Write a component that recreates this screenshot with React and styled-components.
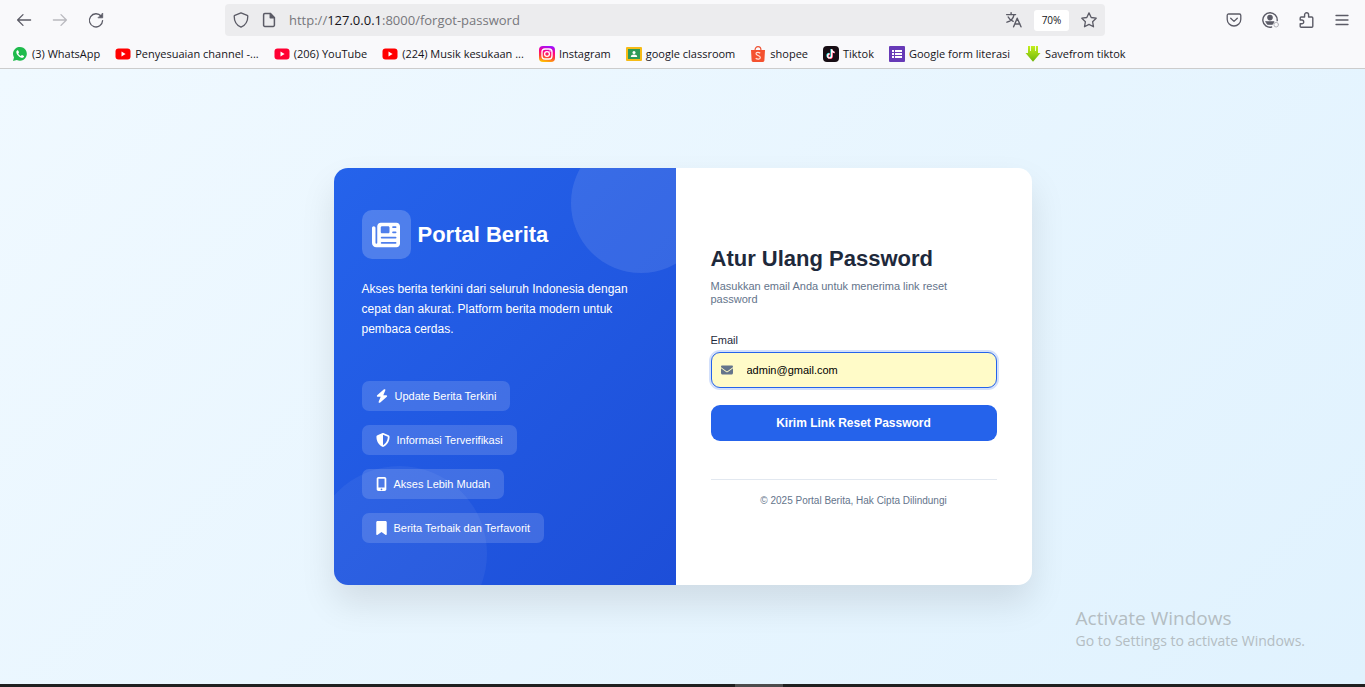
import React from "react";
import styled, { createGlobalStyle } from "styled-components";
import {
  FaNewspaper,
  FaBolt,
  FaShieldHalved,
  FaMobileScreenButton,
  FaBookmark,
  FaEnvelope,
} from "react-icons/fa6";

const ui = `"Open Sans", "Noto Sans", sans-serif`;
const arial = `"Liberation Sans", Arial, sans-serif`;

const GlobalStyle = createGlobalStyle`
  *, *::before, *::after { box-sizing: border-box; }
  body { margin: 0; font-family: ${arial}; }
  h1, h2, p, ul { margin: 0; padding: 0; }
`;

const Window = styled.div`
  min-height: 100vh;
  display: flex;
  flex-direction: column;
`;

/* ---------- Browser chrome ---------- */

const Chrome = styled.header`
  background: #f9f9fb;
  border-bottom: 1px solid #cccccc;
  font-family: ${ui};
  color: #15141a;
`;

const Toolbar = styled.div`
  display: flex;
  align-items: center;
  height: 40px;
  padding: 0 15px 0 16px;
`;

const ToolGroup = styled.div`
  display: flex;
  gap: 20px;
`;

const ToolButton = styled.button`
  display: flex;
  width: 16px;
  height: 16px;
  padding: 0;
  border: 0;
  background: none;
  color: #5b5b66;
  opacity: ${(p) => (p.disabled ? 0.4 : 1)};

  svg {
    width: 16px;
    height: 16px;
    flex: none;
    overflow: visible;
  }
`;

const UrlBar = styled.div`
  flex: 1;
  min-width: 0;
  display: flex;
  align-items: center;
  gap: 12px;
  height: 32px;
  margin: 0 121px;
  padding: 0 8px;
  border-radius: 4px;
  background: #ececee;
`;

const Address = styled.div`
  flex: 1;
  min-width: 0;
  font-size: 13px;
  line-height: 20px;
  color: #77777c;
  white-space: nowrap;
  overflow: hidden;

  b {
    font-weight: 400;
    color: #15141a;
  }
`;

const ZoomLevel = styled.button`
  width: 35px;
  height: 21px;
  padding: 0;
  border: 0;
  border-radius: 3px;
  background: #ffffff;
  color: #15141a;
  font-family: ${ui};
  font-size: 10px;
`;

const Bookmarks = styled.nav`
  display: flex;
  align-items: center;
  gap: 15px;
  height: 28px;
  padding: 0 12px;
  overflow: hidden;
`;

const Bookmark = styled.a`
  display: flex;
  align-items: center;
  gap: 4px;
  flex: none;
  font-size: 11px;
  line-height: 16px;
  color: #15141a;
  text-decoration: none;
  white-space: nowrap;

  svg {
    width: 16px;
    height: 16px;
    flex: none;
  }
`;

/* ---------- Page ---------- */

const Page = styled.main`
  position: relative;
  flex: 1;
  display: flex;
  align-items: center;
  justify-content: center;
  padding: 14px;
  background: linear-gradient(135deg, #f0f9ff 0%, #e0f2fe 100%);
`;

const Card = styled.section`
  display: grid;
  grid-template-columns: 342fr 356fr;
  width: 100%;
  max-width: 698px;
  border-radius: 14px;
  overflow: hidden;
  background: #ffffff;
  box-shadow: 0 18px 35px rgba(0, 0, 0, 0.1);
`;

const Brand = styled.div`
  position: relative;
  overflow: hidden;
  padding: 42px 28px;
  color: #ffffff;
  background: linear-gradient(135deg, #2563eb 0%, #1d4ed8 100%);

  &::before,
  &::after {
    content: "";
    position: absolute;
    border-radius: 50%;
  }

  &::before {
    top: -35px;
    right: -35px;
    width: 140px;
    height: 140px;
    background: rgba(255, 255, 255, 0.1);
  }

  &::after {
    left: -22px;
    bottom: -56px;
    width: 175px;
    height: 175px;
    background: rgba(255, 255, 255, 0.05);
  }
`;

const Logo = styled.div`
  display: flex;
  align-items: center;
  gap: 7px;
`;

const LogoTile = styled.div`
  display: flex;
  align-items: center;
  justify-content: center;
  width: 49px;
  height: 49px;
  border-radius: 10px;
  background: rgba(255, 255, 255, 0.2);
  font-size: 28px;
`;

const BrandName = styled.h1`
  font-size: 22px;
  line-height: 26px;
`;

const Tagline = styled.p`
  margin-top: 20px;
  font-size: 12px;
  line-height: 20px;
`;

const Features = styled.ul`
  display: flex;
  flex-direction: column;
  align-items: flex-start;
  gap: 14px;
  margin-top: 42px;
  list-style: none;
`;

const Feature = styled.li`
  display: flex;
  align-items: center;
  gap: 7px;
  height: 30px;
  padding: 0 14px;
  border-radius: 7px;
  background: rgba(255, 255, 255, 0.15);
  font-size: 11px;

  svg {
    flex: none;
    width: ${(p) => p.$iconWidth}px;
    height: 14px;
  }
`;

const FormPanel = styled.div`
  display: flex;
  flex-direction: column;
  justify-content: center;
  padding: 35px;
`;

const Title = styled.h2`
  font-size: 22px;
  line-height: 26px;
  color: #1e293b;
`;

const Subtitle = styled.p`
  margin-top: 8px;
  font-size: 11px;
  line-height: 13px;
  color: #64748b;
`;

const Form = styled.form`
  display: flex;
  flex-direction: column;
  margin-top: 28px;
`;

const Label = styled.label`
  font-size: 11px;
  line-height: 13px;
  color: #1e293b;
`;

const Field = styled.div`
  position: relative;
  margin: 5px 0 17px;

  svg {
    position: absolute;
    left: 10px;
    top: 12px;
    width: 12px;
    height: 12px;
    color: #64748b;
  }
`;

const Input = styled.input`
  display: block;
  width: 100%;
  height: 36px;
  padding: 0 12px 0 35px;
  border: 1px solid #2563eb;
  border-radius: 9px;
  outline: none;
  background: #fffbc8;
  box-shadow: 0 0 0 2px rgba(37, 99, 235, 0.2);
  font-family: ${arial};
  font-size: 11px;
  color: #000000;
`;

const Submit = styled.button`
  height: 36px;
  border: 0;
  border-radius: 9px;
  background: #2563eb;
  color: #ffffff;
  font-family: ${arial};
  font-size: 12px;
  font-weight: 700;
`;

const Copyright = styled.p`
  margin-top: 38px;
  padding-top: 14px;
  border-top: 1px solid #e2e8f0;
  font-size: 10px;
  line-height: 13px;
  text-align: center;
  color: #64748b;
`;

const Watermark = styled.aside`
  position: absolute;
  right: 60px;
  bottom: 33px;
  font-family: ${ui};
  font-size: 14px;
  line-height: 20px;
  color: #b4bdc2;

  strong {
    display: block;
    font-size: 19px;
    font-weight: 400;
    line-height: 26px;
  }
`;

const Taskbar = styled.footer`
  display: flex;
  justify-content: center;
  height: 3px;
  padding-left: 153px;
  background: #202020;
`;

const ActiveTask = styled.span`
  width: 48px;
  background: #4c4c4c;
`;

/* ---------- Icons ---------- */

const Line = ({ children, w = 1.3 }) => (
  <svg
    viewBox="0 0 16 16"
    fill="none"
    stroke="currentColor"
    strokeWidth={w}
    strokeLinecap="round"
    strokeLinejoin="round"
    aria-hidden="true"
  >
    {children}
  </svg>
);

const BackIcon = () => (
  <Line>
    <path d="M14.6 8H1.6M7 2.6L1.6 8 7 13.4" />
  </Line>
);
const ForwardIcon = () => (
  <Line>
    <path d="M1.4 8h13M9 2.6L14.4 8 9 13.4" />
  </Line>
);
const ReloadIcon = () => (
  <Line>
    <path d="M13.2 4.3A6.6 6.6 0 1 0 14.6 8.6" />
    <path d="M14.7 1.4v4.4h-4.4z" fill="currentColor" strokeWidth="0.8" />
  </Line>
);
const ShieldIcon = () => (
  <Line>
    <path d="M8 0.8l6.2 2.6c.4.2.6.5.6.9C14.8 9 12.4 13.4 8 15.2 3.6 13.4 1.2 9 1.2 4.3c0-.4.2-.7.6-.9z" />
  </Line>
);
const PageIcon = () => (
  <Line w={1.5}>
    <path d="M9.3 1.6H3.8a1.2 1.2 0 0 0-1.2 1.2v10.4a1.2 1.2 0 0 0 1.2 1.2h8.4a1.2 1.2 0 0 0 1.2-1.2V5.7z" />
    <path d="M9.3 1.6v4.1h4.1z" fill="currentColor" />
  </Line>
);
const TranslateIcon = () => (
  <Line w={1.4}>
    <path d="M0.6 2.6h9M5.1 0.6v2M2.2 5c1 2.2 3 3.6 5 4.3M8 2.8C7.4 6 4.6 9 1 10.2" />
    <path d="M7.6 14.8l3.6-8.6 3.8 8.6M8.8 12h5.2" />
  </Line>
);
const StarIcon = () => (
  <Line>
    <path d="M8 0.9l2.2 4.6 5 .7-3.6 3.5.9 5.1L8 12.4l-4.5 2.4.9-5.1L0.8 6.2l5-.7z" />
  </Line>
);
const PocketIcon = () => (
  <Line>
    <path d="M2.6 2h10.8a1.4 1.4 0 0 1 1.4 1.4v3.8a6.8 6.8 0 0 1-13.6 0V3.4A1.4 1.4 0 0 1 2.6 2z" />
    <path d="M4.7 6.2L8 9.4l3.3-3.2" />
  </Line>
);
const AccountIcon = () => (
  <Line w={1.4}>
    <path d="M9.6 15A7.2 7.2 0 1 1 15.2 8.6" />
    <circle cx="8" cy="5.6" r="2.1" fill="currentColor" />
    <path d="M3.9 9.6h8.2c-.3 1.6-1 2.4-1.800 2.9H5.700c-.9-.5-1.600-1.300-1.800-2.900z" fill="currentColor" strokeWidth="0.6" />
    <circle cx="14.2" cy="12.7" r="2.3" stroke="#b5b5bb" strokeWidth="1" />
  </Line>
);
const ExtensionIcon = () => (
  <Line w={1.4}>
    <path d="M2.200 8V6c0-.6.400-1 1-1h3.400V2.800a2 2 0 0 1 4 0V5h3.200c.6 0 1 .4 1 1v8.200c0 .6-.4 1-1 1H3.200c-.6 0-1-.4-1-1v-2.400h1.600a1.900 1.900 0 0 0 0-3.800z" />
  </Line>
);
const MenuIcon = () => (
  <Line>
    <path d="M2 3.500h12M2 8h12M2 12.500h12" />
  </Line>
);

const WhatsAppMark = () => (
  <svg viewBox="0 0 16 16" aria-hidden="true">
    <path d="M1 15l1-3.600A6.900 6.900 0 1 1 4.800 14z" fill="#1fbb4c" />
    <path
      d="M5.600 4.200c-.4 0-1.300.6-1.300 1.800 0 2.600 3.400 5.800 5.900 5.800 1 0 1.900-.8 1.900-1.600 0-.3-1.900-1.300-2.200-1.200-.4.200-.7 1-1 1-.7 0-2.600-1.700-2.600-2.400 0-.3.700-.6.700-1s-.6-2.400-1.400-2.400z"
      fill="#fff"
    />
  </svg>
);
const YouTubeMark = ({ color = "#ff0000" }) => (
  <svg viewBox="0 0 16 16" aria-hidden="true">
    <rect x="0.5" y="2.5" width="15" height="11" rx="3" fill={color} />
    <path d="M6.500 5.600v4.800L10.600 8z" fill="#fff" />
  </svg>
);
const InstagramMark = () => (
  <svg viewBox="0 0 16 16" aria-hidden="true">
    <defs>
      <linearGradient id="ig" x1="0.3" y1="1" x2="0.5" y2="0">
        <stop offset="0" stopColor="#ffc800" />
        <stop offset="0.35" stopColor="#ff3a3a" />
        <stop offset="0.65" stopColor="#ff0084" />
        <stop offset="1" stopColor="#a010ff" />
      </linearGradient>
    </defs>
    <rect width="16" height="16" rx="4" fill="url(#ig)" />
    <g fill="none" stroke="#fff" strokeWidth="1.3">
      <rect x="3" y="3" width="10" height="10" rx="3" />
      <circle cx="8" cy="8" r="2.4" />
    </g>
    <circle cx="11" cy="5" r="0.7" fill="#fff" />
  </svg>
);
const ClassroomMark = () => (
  <svg viewBox="0 0 16 16" aria-hidden="true">
    <rect y="1" width="16" height="14" rx="1" fill="#f6bb16" />
    <rect x="2" y="3" width="12" height="10" fill="#2e9a57" />
    <circle cx="8" cy="6.4" r="1.5" fill="#fff" />
    <path d="M4.800 11c0-1.700 1.500-2.400 3.200-2.400s3.200.7 3.200 2.400z" fill="#fff" />
  </svg>
);
const ShopeeMark = () => (
  <svg viewBox="0 0 16 16" aria-hidden="true">
    <path d="M5 4.500C5 2 6.400.7 8 .7S11 2 11 4.500" fill="none" stroke="#ee5233" strokeWidth="1.2" />
    <path d="M1 4h14l-.6 10.600a1.400 1.400 0 0 1-1.400 1.300H3a1.400 1.400 0 0 1-1.400-1.300z" fill="#f4512f" />
    <path
      d="M10.200 7.200C8.800 6 6 6 6 7.800c0 2 4.300 1.400 4.300 3.700 0 2-3 2.200-4.600.7"
      fill="none"
      stroke="#ffe1d8"
      strokeWidth="1.2"
    />
  </svg>
);
const TiktokMark = () => (
  <svg viewBox="0 0 16 16" aria-hidden="true">
    <rect width="16" height="16" rx="4" fill="#170d14" />
    <g fill="none" strokeWidth="1.6">
      <path d="M8.200 3v6.600a2 2 0 1 1-2-2M8.200 3.400c.2 1.600 1.200 2.500 2.800 2.700" stroke="#25f4ee" />
      <path d="M9.200 3.600v6.600a2 2 0 1 1-2-2M9.200 4c.2 1.600 1.200 2.500 2.800 2.700" stroke="#fe2c55" />
      <path d="M8.700 3.200v6.700a2 2 0 1 1-2-2M8.700 3.600c.2 1.600 1.200 2.500 2.800 2.700" stroke="#fff" strokeWidth="1.3" />
    </g>
  </svg>
);
const FormsMark = () => (
  <svg viewBox="0 0 16 16" aria-hidden="true">
    <rect width="16" height="16" rx="1" fill="#673ab7" />
    <path
      d="M3 4h2v2H3zM6 4h7v2H6zM3 7h2v2H3zM6 7h7v2H6zM3 10h2v2H3zM6 10h7v2H6z"
      fill="#fff"
    />
  </svg>
);
const SavefromMark = () => (
  <svg viewBox="0 0 16 16" aria-hidden="true">
    <defs>
      <linearGradient id="sf" x1="0" y1="0" x2="0" y2="1">
        <stop offset="0" stopColor="#c3ee1c" />
        <stop offset="1" stopColor="#6db50a" />
      </linearGradient>
    </defs>
    <path d="M3 0h10v7h2.500L8 15.800.5 7H3z" fill="url(#sf)" />
    <path d="M5 0h1v5H5zM10 0h1v5h-1z" fill="#f4fbd8" />
  </svg>
);

/* ---------- Data ---------- */

const bookmarks = [
  { label: "(3) WhatsApp", icon: <WhatsAppMark /> },
  { label: "Penyesuaian channel -...", icon: <YouTubeMark /> },
  { label: "(206) YouTube", icon: <YouTubeMark color="#ff0033" /> },
  { label: "(224) Musik kesukaan ...", icon: <YouTubeMark /> },
  { label: "Instagram", icon: <InstagramMark /> },
  { label: "google classroom", icon: <ClassroomMark /> },
  { label: "shopee", icon: <ShopeeMark /> },
  { label: "Tiktok", icon: <TiktokMark /> },
  { label: "Google form literasi", icon: <FormsMark /> },
  { label: "Savefrom tiktok", icon: <SavefromMark /> },
];

const features = [
  { label: "Update Berita Terkini", Icon: FaBolt, width: 12 },
  { label: "Informasi Terverifikasi", Icon: FaShieldHalved, width: 14 },
  { label: "Akses Lebih Mudah", Icon: FaMobileScreenButton, width: 11 },
  { label: "Berita Terbaik dan Terfavorit", Icon: FaBookmark, width: 11 },
];

export default function App() {
  return (
    <Window>
      <GlobalStyle />
      <Chrome>
        <Toolbar>
          <ToolGroup>
            <ToolButton aria-label="Back"><BackIcon /></ToolButton>
            <ToolButton aria-label="Forward" disabled><ForwardIcon /></ToolButton>
            <ToolButton aria-label="Reload"><ReloadIcon /></ToolButton>
          </ToolGroup>
          <UrlBar>
            <ToolButton aria-label="Tracking protection"><ShieldIcon /></ToolButton>
            <ToolButton aria-label="Site information"><PageIcon /></ToolButton>
            <Address>
              http://<b>127.0.0.1</b>:8000/forgot-password
            </Address>
            <ToolButton aria-label="Translate"><TranslateIcon /></ToolButton>
            <ZoomLevel>70%</ZoomLevel>
            <ToolButton aria-label="Bookmark this page"><StarIcon /></ToolButton>
          </UrlBar>
          <ToolGroup>
            <ToolButton aria-label="Pocket"><PocketIcon /></ToolButton>
            <ToolButton aria-label="Account"><AccountIcon /></ToolButton>
            <ToolButton aria-label="Extensions"><ExtensionIcon /></ToolButton>
            <ToolButton aria-label="Menu"><MenuIcon /></ToolButton>
          </ToolGroup>
        </Toolbar>
        <Bookmarks aria-label="Bookmarks">
          {bookmarks.map((b) => (
            <Bookmark key={b.label} href="#">
              {b.icon}
              {b.label}
            </Bookmark>
          ))}
        </Bookmarks>
      </Chrome>

      <Page>
        <Card>
          <Brand>
            <Logo>
              <LogoTile><FaNewspaper /></LogoTile>
              <BrandName>Portal Berita</BrandName>
            </Logo>
            <Tagline>
              Akses berita terkini dari seluruh Indonesia dengan cepat dan akurat. Platform berita
              modern untuk pembaca cerdas.
            </Tagline>
            <Features>
              {features.map(({ label, Icon, width }) => (
                <Feature key={label} $iconWidth={width}>
                  <Icon />
                  {label}
                </Feature>
              ))}
            </Features>
          </Brand>
          <FormPanel>
            <Title>Atur Ulang Password</Title>
            <Subtitle>Masukkan email Anda untuk menerima link reset password</Subtitle>
            <Form onSubmit={(e) => e.preventDefault()}>
              <Label htmlFor="email">Email</Label>
              <Field>
                <Input id="email" type="email" defaultValue="admin@gmail.com" />
                <FaEnvelope />
              </Field>
              <Submit type="submit">Kirim Link Reset Password</Submit>
            </Form>
            <Copyright>© 2025 Portal Berita, Hak Cipta Dilindungi</Copyright>
          </FormPanel>
        </Card>
        <Watermark>
          <strong>Activate Windows</strong>
          Go to Settings to activate Windows.
        </Watermark>
      </Page>

      <Taskbar>
        <ActiveTask />
      </Taskbar>
    </Window>
  );
}
